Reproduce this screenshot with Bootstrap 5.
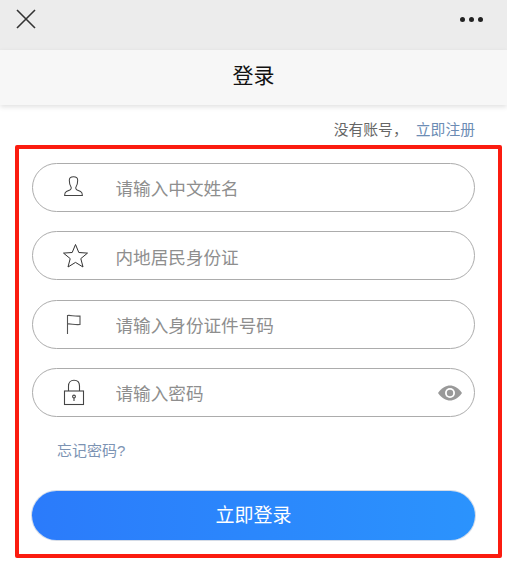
<!DOCTYPE html>
<html lang="zh-CN">

<head>
  <meta charset="UTF-8">
  <meta name="viewport" content="width=device-width, initial-scale=1">
  <title>登录</title>
  <link href="https://cdn.jsdelivr.net/npm/bootstrap@5.3.0/dist/css/bootstrap.min.css" rel="stylesheet">
  <style>
    body {
      background: #fff;
      font-family: "Liberation Sans", "Noto Sans CJK SC", sans-serif;
      height: 580px;
      overflow: hidden;
    }

    .top-strip {
      height: 50px;
      background: #ececec;
      padding: 0 24px 12px 16px;
    }

    .title-strip {
      height: 55px;
      background: #f7f7f7;
      box-shadow: 0 2px 5px rgba(0, 0, 0, .12);
      font-size: 21px;
      color: #111;
      padding-bottom: 4px;
    }

    .more-dots {
      gap: 4px;
    }

    .more-dots i {
      width: 5px;
      height: 5px;
      border-radius: 50%;
      background: #222;
      display: block;
    }

    .signup-line {
      height: 40px;
      padding: 10px 32px 0 0;
      font-size: 14.8px;
      line-height: 30px;
      color: #666;
      margin-bottom: 0;
    }

    .blue-link {
      color: #6c8cb4;
      text-decoration: none;
    }

    .red-box {
      margin: 0 5px 0 15px;
      height: 413px;
      border: 4px solid #fb1c10;
      border-radius: 2px;
      padding: 14px 23px 0 13px;
    }

    .pill-field {
      height: 49px;
      border: 1px solid #acacac;
      border-radius: 25px;
      margin-bottom: 19.4px;
      padding: 0 11px 0 0;
    }

    .field-icon {
      width: 82.5px;
      padding-left: 29px;
      flex: none;
    }

    .pill-input {
      border: 0;
      outline: 0;
      padding: 4px 0 0;
      flex: 1;
      min-width: 0;
      background: none;
      font-size: 17.6px;
    }

    .pill-input::placeholder {
      color: #8e8e8e;
      opacity: 1;
    }

    .forgot-link {
      display: block;
      margin: 22.5px 0 0 25px;
      font-size: 15px;
      line-height: 22px;
      color: #7c93b3;
      text-decoration: none;
    }

    .login-btn {
      display: block;
      width: 100%;
      height: 49px;
      margin-top: 29.5px;
      padding: 2px 0 0;
      border: 0;
      border-radius: 25px;
      background: linear-gradient(90deg, #2b7bfb, #2b93fd);
      box-shadow: 0 0 0 1px #d4dbe6;
      color: #fff;
      font-size: 19px;
    }
  </style>
</head>

<body>
  <div class="top-strip d-flex align-items-center justify-content-between">
    <svg width="20" height="20" viewBox="0 0 20 20" fill="none" stroke="#333" stroke-width="1.6">
      <path d="M1 1L19 19M19 1L1 19" />
    </svg>
    <div class="more-dots d-flex"><i></i><i></i><i></i></div>
  </div>
  <div class="title-strip d-flex align-items-center justify-content-center">登录</div>

  <p class="signup-line text-end">没有账号， <a href="#" class="blue-link ms-1">立即注册</a></p>

  <form class="red-box">
    <div class="pill-field d-flex align-items-center">
      <span class="field-icon d-flex">
        <svg width="23" height="23" viewBox="0 0 22 22" fill="none" stroke="#444" stroke-width="1">
          <path d="M7 4C7 1.800 9 .8 11 .8s4 1 4 3.200c0 2.800-.5 5-1.600 6.500-.7 1 0 2.300 1.100 2.900l3.300 1.500c1.200.6 1.700 2 1.700 3.800H2.500c0-1.800.5-3.200 1.700-3.800l3.300-1.500c1.100-.6 1.800-1.900 1.100-2.900C7.500 9 7 6.800 7 4z" />
        </svg>
      </span>
      <input class="pill-input" type="text" placeholder="请输入中文姓名">
    </div>
    <div class="pill-field d-flex align-items-center">
      <span class="field-icon d-flex">
        <svg width="27" height="26" viewBox="0 0 26 26" fill="none" stroke="#333" stroke-width="1">
          <path d="M13 1.500l3.300 8 8.700.6-6.700 5.500 2.200 8.400L13 19.400 5.500 24l2.200-8.400L1 10.100l8.700-.6z" />
        </svg>
      </span>
      <input class="pill-input" type="text" placeholder="内地居民身份证">
    </div>
    <div class="pill-field d-flex align-items-center">
      <span class="field-icon d-flex">
        <svg width="22" height="22" viewBox="0 0 22 22" fill="none" stroke="#555" stroke-width="1.100">
          <path d="M5.500 21V2.500C9 2 12 3.500 18 3V11.500C12 12 9 10.500 5.500 11" />
        </svg>
      </span>
      <input class="pill-input" type="text" placeholder="请输入身份证件号码">
    </div>
    <div class="pill-field d-flex align-items-center">
      <span class="field-icon d-flex">
        <svg width="24" height="27" viewBox="0 0 24 27" fill="none" stroke="#444" stroke-width="1.100">
          <path d="M6.500 12V7c0-3.500 2.200-5.800 5.500-5.800S17.500 3.500 17.500 7v5" />
          <rect x="2.500" y="12" width="19" height="13.500" />
          <circle cx="12" cy="17.500" r="1.400" />
          <path d="M12 19v3" />
        </svg>
      </span>
      <input class="pill-input" type="password" placeholder="请输入密码">
      <svg width="26" height="16" viewBox="0 0 26 16">
        <path d="M1 8C5 2.500 9 .5 13 .5S21 2.500 25 8c-4 5.500-8 7.500-12 7.500S5 13.500 1 8z" fill="#999" />
        <circle cx="13" cy="8" r="5" fill="#fff" />
        <circle cx="13" cy="8" r="3.200" fill="#999" />
      </svg>
    </div>
    <a href="#" class="forgot-link">忘记密码?</a>
    <button type="button" class="login-btn">立即登录</button>
  </form>

  <script src="https://cdn.jsdelivr.net/npm/bootstrap@5.3.0/dist/js/bootstrap.bundle.min.js"></script>
</body>

</html>
